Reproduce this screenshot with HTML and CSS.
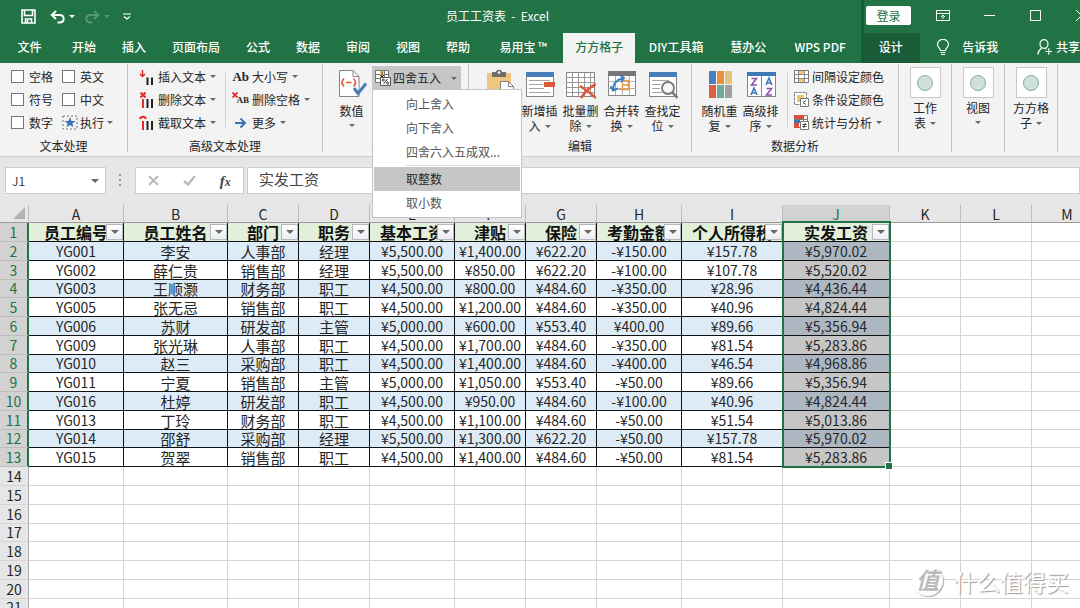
FILE: index.html
```html
<!DOCTYPE html>
<html lang="zh-CN">
<head>
<meta charset="utf-8">
<meta name="viewport" content="width=device-width, initial-scale=1">
<title>员工工资表 - Excel</title>
<link rel="stylesheet" href="styles.css">
</head>
<body>
<div class="app">
  <header class="titlebar">
    <div class="quick">
      <button class="quick-btn" aria-label="保存"><svg width="15" height="15" viewBox="0 0 15 15" fill="none" stroke="#fff" stroke-width="1.6"><path d="M1 1h13v13H1z"/><path d="M3.5 1v5.5h8V1M4.5 14v-4h6v4M6.5 11v3"/></svg></button>
      <button class="quick-btn undo" aria-label="撤消"><svg width="15" height="14" viewBox="0 0 15 14" fill="none" stroke="#fff" stroke-width="2"><path d="M1.5 5h8c5.500 0 5.500 7.500 0 7.500H7.500M6 1L1.800 5 6 9"/></svg><i class="caret"></i></button>
      <button class="quick-btn redo" aria-label="恢复"><svg width="15" height="14" viewBox="0 0 15 14" fill="none" stroke="#fff" stroke-width="2"><path d="M13.500 5h-8c-5.500 0-5.500 7.500 0 7.500h2M9 1l4.200 4L9 9"/></svg><i class="caret"></i></button>
      <button class="quick-btn custom" aria-label="自定义快速访问工具栏"><svg width="8" height="7" viewBox="0 0 8 7" fill="none" stroke="#fff" stroke-width="1.200"><path d="M0 1h8M1 3.500l3 2.500 3-2.500"/></svg></button>
    </div>
    <h1 class="doc-title">员工工资表&nbsp; -&nbsp; Excel</h1>
    <div class="window-side">
      <button class="login">登录</button>
      <button class="win-btn" aria-label="功能区显示选项"><svg width="14" height="11" viewBox="0 0 14 11" fill="none" stroke="#fff"><path d="M.5.5h13v10H.5zM.5 3.500h13M7 9V5M5 7l2-2 2 2"/></svg></button>
      <button class="win-btn" aria-label="最小化"><svg width="11" height="11" viewBox="0 0 11 11" stroke="#fff"><path d="M0 5.500h11"/></svg></button>
      <button class="win-btn" aria-label="最大化"><svg width="11" height="11" viewBox="0 0 11 11" fill="none" stroke="#fff"><path d="M.5.5h10v10H.5z"/></svg></button>
      <button class="win-btn" aria-label="关闭"><svg width="11" height="11" viewBox="0 0 11 11" stroke="#fff"><path d="M0 0l11 11M11 0L0 11"/></svg></button>
    </div>
  </header>

  <nav class="tabs" aria-label="功能区选项卡">
    <button class="tab file">文件</button>
    <button class="tab">开始</button>
    <button class="tab">插入</button>
    <button class="tab">页面布局</button>
    <button class="tab">公式</button>
    <button class="tab">数据</button>
    <button class="tab">审阅</button>
    <button class="tab">视图</button>
    <button class="tab">帮助</button>
    <button class="tab medium">易用宝 ™</button>
    <button class="tab active">方方格子</button>
    <button class="tab wide">DIY工具箱</button>
    <button class="tab">慧办公</button>
    <button class="tab wide">WPS PDF</button>
    <button class="tab context">设计</button>
    <button class="tell"><svg width="14" height="17" viewBox="0 0 14 17" fill="none" stroke="#fff" stroke-width="1.200"><path d="M4.500 11.500C4.500 9 1.500 8.500 1.500 5.500a5.300 5 0 0 1 11 0c0 3-3 3.500-3 6zM4.500 13.500h5M5 15.500h4"/></svg>告诉我</button>
    <button class="share"><svg width="15" height="16" viewBox="0 0 15 16" fill="none" stroke="#fff" stroke-width="1.200"><ellipse cx="7" cy="5" rx="4" ry="4.300"/><path d="M.8 15.500c.3-4 2-5 4-6.500M8.500 9.500l1 .8M8.500 12.500H15M11.800 9.300v6.500"/></svg>共享</button>
  </nav>

  <section class="ribbon">
    <div class="group text-group">
      <div class="tools">
        <div class="stack">
          <label class="row check"><input type="checkbox">空格</label>
          <label class="row check"><input type="checkbox">符号</label>
          <label class="row check"><input type="checkbox">数字</label>
        </div>
        <div class="stack">
          <label class="row check"><input type="checkbox">英文</label>
          <label class="row check"><input type="checkbox">中文</label>
          <button class="row run"><svg width="16" height="15" viewBox="0 0 16 15"><path d="M1 1h14v13H1z" fill="none" stroke="#777" stroke-dasharray="2 2"/><path d="M8 2l1.500 4h4l-3.200 2.400 1.200 3.900L8 10l-3.500 2.300 1.200-3.900L2.500 6h4z" fill="#3a73b4"/></svg>执行<i class="caret"></i></button>
        </div>
      </div>
      <div class="group-label">文本处理</div>
    </div>

    <div class="group adv-group">
      <div class="tools">
        <div class="stack">
          <button class="row"><svg width="16" height="16" viewBox="0 0 16 16" fill="none" stroke-width="2"><path d="M8.500 8.500V16M13 8.500V16" stroke="#222"/><path d="M3.500 1v6M1 5l2.500 2.500L6 5" stroke="#e8262b" stroke-width="1.500"/></svg>插入文本<i class="caret"></i></button>
          <button class="row"><svg width="16" height="16" viewBox="0 0 16 16" fill="none" stroke-width="2"><path d="M8.500 7V16M13 7V16" stroke="#222"/><path d="M4 7v9M1.500.5l5 5M6.500.5l-5 5" stroke="#e8262b"/></svg>删除文本<i class="caret"></i></button>
          <button class="row"><svg width="16" height="16" viewBox="0 0 16 16" fill="none" stroke-width="2"><path d="M8.500 6V15M13 6V15" stroke="#222"/><path d="M4 6v9M1 4c1-3 5-3 6 0" stroke="#e8262b"/></svg>截取文本<i class="caret"></i></button>
        </div>
        <div class="stack divided">
          <button class="row"><span class="letters">Ab</span>大小写<i class="caret"></i></button>
          <button class="row"><span class="letters small">AB<svg class="cross" width="6" height="6" viewBox="0 0 6 6" stroke="#e8262b" stroke-width="1.800"><path d="M.5.5l5 5M5.500.5l-5 5"/></svg></span>删除空格<i class="caret"></i></button>
          <button class="row"><svg width="17" height="12" viewBox="0 0 17 12" fill="none" stroke="#3a73b4" stroke-width="2"><path d="M3 6h10M8.500 1.500L13 6l-4.500 4.500"/></svg>更多<i class="caret"></i></button>
        </div>
      </div>
      <div class="group-label">高级文本处理</div>
    </div>

    <div class="group num-group">
      <div class="tools">
        <button class="big"><svg width="30" height="30" viewBox="0 0 30 30" fill="none"><path d="M2.500 1.500H16l6 6v20H2.500z" fill="#fff" stroke="#858585"/><path d="M16 1.500v6h6" stroke="#858585"/><path d="M7 9.500c-2.500 2.500-2.500 5.500 0 8M16.500 9.500c2.500 2.500 2.500 5.500 0 8M9 13.500h5.500" stroke="#e0603c" stroke-width="1.700"/><path d="M17 19l4 5.500 8-10" stroke="#4a7ebb" stroke-width="3"/></svg><span>数值</span><i class="caret"></i></button>
        <div class="menu-anchor">
          <button class="drop" aria-haspopup="menu" aria-expanded="true"><svg width="16" height="16" viewBox="0 0 16 16"><path d="M.5.5h13v12H.5z" fill="#fff" stroke="#777"/><path d="M.5 4.500h13M.5 8.500h13M9.500.5v12" stroke="#777" fill="none"/><path d="M5 1h4v8H5z" fill="#f4cf7f"/><path d="M7 1.500v5M5 5l2 2 2-2" stroke="#333" fill="none"/><path d="M5.500 7.500h10v8h-10z" fill="#fff" stroke="#555"/><g fill="none" stroke="#333"><circle cx="8.300" cy="10" r="1"/><circle cx="12.700" cy="13" r="1"/><path d="M12.500 9l-4 5"/></g></svg><span>四舍五入</span><i class="caret"></i></button>
          <div class="menu" role="menu">
            <button role="menuitem">向上舍入</button>
            <button role="menuitem">向下舍入</button>
            <button role="menuitem">四舍六入五成双...</button>
            <hr>
            <button role="menuitem" class="hover">取整数</button>
            <button role="menuitem">取小数</button>
          </div>
        </div>
      </div>
      <div class="group-label">数值录入</div>
    </div>

    <div class="group edit-group">
      <div class="tools">
        <button class="big" aria-label="粘贴"><svg width="30" height="30" viewBox="0 0 30 30"><path d="M3 4h24v24H3z" fill="#f0c67c"/><path d="M8 3h4c0-3 6-3 6 0h4v5H8z" fill="#6d6d6d"/><circle cx="15" cy="3.500" r="1.300" fill="#fff"/><path d="M16.500 12.500h8l5 5v11h-13z" fill="#fff" stroke="#858585"/><path d="M24.500 12.500v5h5" fill="none" stroke="#858585"/></svg></button>
        <button class="big"><svg width="30" height="30" viewBox="0 0 30 30" fill="none"><path d="M1.500 3.500h27v24h-27z" fill="#fff" stroke="#858585"/><path d="M1 3h28v5H1z" fill="#4a7ebb"/><path d="M4 11.500h21M4 15.500h14M4 19.500h15M4 23.500h21" stroke="#a5a5a5"/><path d="M19 13h11v5H19z" fill="#dd5b3b"/></svg><span>新增插入<i class="caret"></i></span></button>
        <button class="big"><svg width="30" height="30" viewBox="0 0 30 30" fill="none"><path d="M.5 3.500h28v24H.5z" fill="#fff" stroke="#858585"/><path d="M.5 8.500h28M.5 13.500h28M.5 18.500h28M.5 23.500h28M6.500 3.500v24M12.500 3.500v24M18.500 3.500v24M24.500 3.500v24" stroke="#999"/><path d="M14 17c5 3 10 7 16 12M30 15c-6 3-11 8-15 14" stroke="#dd5b3b" stroke-width="2.600"/></svg><span>批量删除<i class="caret"></i></span></button>
        <button class="big"><svg width="30" height="30" viewBox="0 0 30 30" fill="none"><path d="M1.500 3.500h27v23h-27z" fill="#fff" stroke="#858585"/><path d="M1 2h28v5H1z" fill="#777"/><path d="M1.500 12.500h27M1.500 19.500h27M8.500 7v19M15.500 7v19M22.500 7v19" stroke="#b2b2b2"/><path d="M15.500 11.500h6v9h-6zM15.500 16h6M12 20.500h9.500" stroke="#e8974c" stroke-width="1.500"/><path d="M6 21c0-6 3-10 10-12M13 6l4 3-3 4M3.500 17L6 21.500l5-2" stroke="#3f80c5" stroke-width="2"/></svg><span>合并转换<i class="caret"></i></span></button>
        <button class="big"><svg width="30" height="30" viewBox="0 0 30 30" fill="none"><path d="M1.500 3.500h27v24h-27z" fill="#fff" stroke="#858585"/><path d="M1 3h28v5H1z" fill="#4a7ebb"/><path d="M4 11.500h17M4 15.500h9M4 19.500h8M4 23.500h10" stroke="#a5a5a5"/><circle cx="20" cy="19" r="6" fill="#f8f8f8" stroke="#777" stroke-width="1.800"/><path d="M24.500 23.500l5 5.500" stroke="#777" stroke-width="2.600"/></svg><span>查找定位<i class="caret"></i></span></button>
      </div>
      <div class="group-label">编辑</div>
    </div>

    <div class="group data-group">
      <div class="tools">
        <button class="big"><svg width="30" height="30" viewBox="0 0 30 30"><path d="M4 2h7v13H4z" fill="#4a80bc"/><path d="M12 2h7v13h-7z" fill="#e88f40"/><path d="M20 2h7v13h-7z" fill="#e9c37c"/><path d="M4 16h7v13H4z" fill="#dd5f42"/><path d="M12 16h7v13h-7z" fill="#70aa93"/><path d="M20 16h7v13h-7z" fill="#a0a0a0"/></svg><span>随机重复<i class="caret"></i></span></button>
        <button class="big"><svg width="30" height="30" viewBox="0 0 30 30" fill="none"><path d="M1.500 3.500h28v24h-28zM15.500 6v21" fill="#fff" stroke="#858585"/><path d="M1 3h29v4H1z" fill="#3f78b8"/><path d="M5.500 9.500h5l-5 6.500h5.500M20.500 19.500h5l-5 6.500H26" stroke="#8f52ab" stroke-width="1.600"/><path d="M5 26l3-7 3 7M6 24h4M20 16l3-7 3 7M21 14h4" stroke="#3f78b8" stroke-width="1.600"/></svg><span>高级排序<i class="caret"></i></span></button>
        <div class="stack divided">
          <button class="row"><svg width="15" height="14" viewBox="0 0 15 14" fill="none"><path d="M.5.5h14v12H.5z" fill="#fff" stroke="#777"/><path d="M.5 4.500h14M.5 8.500h14M4.500.5v12M10.500.5v12" stroke="#888"/><path d="M5 1h5v3H5zM5 9h5v3H5z" fill="#f0c878"/></svg>间隔设定颜色</button>
          <button class="row"><svg width="15" height="15" viewBox="0 0 15 15" fill="none"><path d="M.5.5h12v12H.5z" fill="#fff" stroke="#777" stroke-dasharray="3 1"/><path d="M3 3h7v7H3z" fill="#f0c070"/><path d="M6.500 6.500h8v8h-8z" fill="#fff" stroke="#777"/><path d="M12 8.500l-3 2 3 2" stroke="#444"/></svg>条件设定颜色</button>
          <button class="row"><svg width="15" height="15" viewBox="0 0 15 15" fill="none"><path d="M.5.5h13v12H.5z" fill="#fff" stroke="#777"/><path d="M0 0h9v4H0zM0 8h5v5H0z" fill="#d94f38"/><path d="M0 4h6v4H0z" fill="#3f78b8"/><path d="M.5 4.500h13M9.500.5v6" stroke="#777"/><path d="M6.500 6.500h8v8h-8z" fill="#fff" stroke="#777"/><path d="M8.500 9.500h4M8.500 11.500h4M11.500 8l-2 5" stroke="#444"/></svg>统计与分析<i class="caret"></i></button>
        </div>
      </div>
      <div class="group-label">数据分析</div>
    </div>

    <div class="group mini"><button class="big"><span class="tile"></span><span>工作<br>表<i class="caret"></i></span></button></div>
    <div class="group mini"><button class="big"><span class="tile"></span><span>视图</span><i class="caret"></i></button></div>
    <div class="group mini"><button class="big"><span class="tile"></span><span>方方格子<i class="caret"></i></span></button></div>
  </section>

  <section class="formula-bar">
    <div class="name-box"><input type="text" value="J1" aria-label="名称框"><i class="caret"></i></div>
    <svg class="grip" width="3" height="13" viewBox="0 0 3 13" fill="#999"><path d="M0 0h2v2H0zM0 5h2v2H0zM0 10h2v2H0z"/></svg>
    <div class="formula-tools">
      <button aria-label="取消"><svg width="11" height="11" viewBox="0 0 11 11" stroke="#b9b9b9" stroke-width="1.800"><path d="M1 1l9 9M10 1l-9 9"/></svg></button>
      <button aria-label="输入"><svg width="13" height="11" viewBox="0 0 13 11" fill="none" stroke="#b9b9b9" stroke-width="2.400"><path d="M1 6l4 3.500L12 1"/></svg></button>
      <button class="fx" aria-label="插入函数"><em>f</em><em class="sub">x</em></button>
    </div>
    <input class="formula" type="text" value="实发工资" aria-label="编辑栏">
  </section>

  <main class="sheet">
    <table class="cells">
      <colgroup><col class="w-head"><col class="w-a"><col class="w-b"><col class="w-s"><col class="w-s"><col class="w-m"><col class="w-s"><col class="w-s"><col class="w-m"><col class="w-i"><col class="w-j"><col class="w-s"><col class="w-s"><col class="w-s"></colgroup>
      <thead>
        <tr><th class="corner"></th><th>A</th><th>B</th><th>C</th><th>D</th><th>E</th><th>F</th><th>G</th><th>H</th><th>I</th><th class="picked">J</th><th>K</th><th>L</th><th>M</th></tr>
      </thead>
      <tbody class="data">
        <tr class="fields"><th>1</th><td>员工编号<button class="filter" aria-label="筛选员工编号"></button></td><td>员工姓名<button class="filter" aria-label="筛选员工姓名"></button></td><td>部门<button class="filter" aria-label="筛选部门"></button></td><td>职务<button class="filter" aria-label="筛选职务"></button></td><td>基本工资<button class="filter" aria-label="筛选基本工资"></button></td><td>津贴<button class="filter" aria-label="筛选津贴"></button></td><td>保险<button class="filter" aria-label="筛选保险"></button></td><td>考勤金额<button class="filter" aria-label="筛选考勤金额"></button></td><td>个人所得税<button class="filter" aria-label="筛选个人所得税"></button></td><td class="sel first">实发工资<button class="filter" aria-label="筛选实发工资"></button></td><td></td><td></td><td></td></tr>
        <tr><th>2</th><td>YG001</td><td class="zh">李安</td><td class="zh">人事部</td><td class="zh">经理</td><td>¥5,500.00</td><td>¥1,400.00</td><td>¥622.20</td><td>-¥150.00</td><td>¥157.78</td><td class="sel">¥5,970.02</td><td></td><td></td><td></td></tr>
        <tr><th>3</th><td>YG002</td><td class="zh">薛仁贵</td><td class="zh">销售部</td><td class="zh">经理</td><td>¥5,500.00</td><td>¥850.00</td><td>¥622.20</td><td>-¥100.00</td><td>¥107.78</td><td class="sel">¥5,520.02</td><td></td><td></td><td></td></tr>
        <tr><th>4</th><td>YG003</td><td class="zh">王顺灏</td><td class="zh">财务部</td><td class="zh">职工</td><td>¥4,500.00</td><td>¥800.00</td><td>¥484.60</td><td>-¥350.00</td><td>¥28.96</td><td class="sel">¥4,436.44</td><td></td><td></td><td></td></tr>
        <tr><th>5</th><td>YG005</td><td class="zh">张无忌</td><td class="zh">销售部</td><td class="zh">职工</td><td>¥4,500.00</td><td>¥1,200.00</td><td>¥484.60</td><td>-¥350.00</td><td>¥40.96</td><td class="sel">¥4,824.44</td><td></td><td></td><td></td></tr>
        <tr><th>6</th><td>YG006</td><td class="zh">苏财</td><td class="zh">研发部</td><td class="zh">主管</td><td>¥5,000.00</td><td>¥600.00</td><td>¥553.40</td><td>¥400.00</td><td>¥89.66</td><td class="sel">¥5,356.94</td><td></td><td></td><td></td></tr>
        <tr><th>7</th><td>YG009</td><td class="zh">张光琳</td><td class="zh">人事部</td><td class="zh">职工</td><td>¥4,500.00</td><td>¥1,700.00</td><td>¥484.60</td><td>-¥350.00</td><td>¥81.54</td><td class="sel">¥5,283.86</td><td></td><td></td><td></td></tr>
        <tr><th>8</th><td>YG010</td><td class="zh">赵三</td><td class="zh">采购部</td><td class="zh">职工</td><td>¥4,500.00</td><td>¥1,400.00</td><td>¥484.60</td><td>-¥400.00</td><td>¥46.54</td><td class="sel">¥4,968.86</td><td></td><td></td><td></td></tr>
        <tr><th>9</th><td>YG011</td><td class="zh">宁夏</td><td class="zh">销售部</td><td class="zh">主管</td><td>¥5,000.00</td><td>¥1,050.00</td><td>¥553.40</td><td>-¥50.00</td><td>¥89.66</td><td class="sel">¥5,356.94</td><td></td><td></td><td></td></tr>
        <tr><th>10</th><td>YG016</td><td class="zh">杜婷</td><td class="zh">研发部</td><td class="zh">职工</td><td>¥4,500.00</td><td>¥950.00</td><td>¥484.60</td><td>-¥100.00</td><td>¥40.96</td><td class="sel">¥4,824.44</td><td></td><td></td><td></td></tr>
        <tr><th>11</th><td>YG013</td><td class="zh">丁玲</td><td class="zh">财务部</td><td class="zh">职工</td><td>¥4,500.00</td><td>¥1,100.00</td><td>¥484.60</td><td>-¥50.00</td><td>¥51.54</td><td class="sel">¥5,013.86</td><td></td><td></td><td></td></tr>
        <tr><th>12</th><td>YG014</td><td class="zh">邵舒</td><td class="zh">采购部</td><td class="zh">经理</td><td>¥5,500.00</td><td>¥1,300.00</td><td>¥622.20</td><td>-¥50.00</td><td>¥157.78</td><td class="sel">¥5,970.02</td><td></td><td></td><td></td></tr>
        <tr><th>13</th><td>YG015</td><td class="zh">贺翠</td><td class="zh">销售部</td><td class="zh">职工</td><td>¥4,500.00</td><td>¥1,400.00</td><td>¥484.60</td><td>-¥50.00</td><td>¥81.54</td><td class="sel last">¥5,283.86<span class="handle"></span></td><td></td><td></td><td></td></tr>
      </tbody>
      <tbody class="blank">
        <tr><th>14</th><td></td><td></td><td></td><td></td><td></td><td></td><td></td><td></td><td></td><td></td><td></td><td></td><td></td></tr>
        <tr><th>15</th><td></td><td></td><td></td><td></td><td></td><td></td><td></td><td></td><td></td><td></td><td></td><td></td><td></td></tr>
        <tr><th>16</th><td></td><td></td><td></td><td></td><td></td><td></td><td></td><td></td><td></td><td></td><td></td><td></td><td></td></tr>
        <tr><th>17</th><td></td><td></td><td></td><td></td><td></td><td></td><td></td><td></td><td></td><td></td><td></td><td></td><td></td></tr>
        <tr><th>18</th><td></td><td></td><td></td><td></td><td></td><td></td><td></td><td></td><td></td><td></td><td></td><td></td><td></td></tr>
        <tr><th>19</th><td></td><td></td><td></td><td></td><td></td><td></td><td></td><td></td><td></td><td></td><td></td><td></td><td></td></tr>
        <tr><th>20</th><td></td><td></td><td></td><td></td><td></td><td></td><td></td><td></td><td></td><td></td><td></td><td></td><td></td></tr>
        <tr><th>21</th><td></td><td></td><td></td><td></td><td></td><td></td><td></td><td></td><td></td><td></td><td></td><td></td><td></td></tr>
      </tbody>
    </table>
    <div class="watermark"><span class="mark">值</span><span>什么值得买</span></div>
  </main>
</div>
</body>
</html>
```
FILE: styles.css
```css
* { box-sizing: border-box; }

body {
  margin: 0;
  background: #fff;
  color: #262626;
  font: 12px/16px "Noto Sans CJK SC", "Noto Sans", sans-serif;
}

button, input {
  margin: 0;
  padding: 0;
  border: 0;
  background: none;
  color: inherit;
  font: inherit;
  border-radius: 0;
}

svg { flex: none; display: block; }

.app {
  display: flex;
  flex-direction: column;
  height: 100vh;
  overflow: hidden;
}

.caret {
  display: inline-block;
  flex: none;
  border: 3px solid transparent;
  border-top-color: #666;
  border-bottom: 0;
}

/* Title bar */
.titlebar {
  display: flex;
  height: 33px;
  flex: none;
  background: #217346;
  color: #fff;
}

.quick {
  display: flex;
  align-items: center;
  flex: 0 0 134px;
  padding-left: 21px;
}

.quick-btn { display: flex; align-items: center; gap: 4px; }
.quick-btn .caret { border-top-color: #fff; }
.undo { margin-left: 14px; }
.redo { margin-left: 10px; opacity: .25; }
.custom { margin-left: 13px; }

.doc-title {
  flex: 1;
  margin: 0;
  font-size: 12px;
  font-weight: 400;
  line-height: 31px;
  text-align: center;
  white-space: nowrap;
}

.window-side {
  display: flex;
  align-items: center;
  flex: 0 0 219px;
  padding: 0 0 2px 2px;
  border-left: 3px solid #1b5c38;
  overflow: hidden;
}

.login {
  flex: 0 0 45px;
  height: 19px;
  margin-right: 9px;
  border-radius: 2px;
  background: #fff;
  color: #217346;
}

.win-btn { flex: 0 0 46px; display: flex; justify-content: center; }

/* Tabs */
.tabs {
  display: flex;
  flex: none;
  height: 30px;
  background: #217346;
  color: #fff;
  font-weight: 500;
  white-space: nowrap;
}

.tab { flex: none; padding: 0 13px 2px; }
.tab.file { width: 59px; }
.tab.medium { width: 80px; padding: 0 0 2px; }
.tab.wide { width: 82px; padding: 0 0 2px; }
.tab.active { padding: 0 12px 2px; background: #f3f3f3; color: #217346; }
.tab.context { width: 59px; background: #1b5c38; }

.tell, .share { display: flex; align-items: center; padding-bottom: 2px; }
.tell { gap: 12px; margin-left: 16px; }
.share { gap: 4px; margin-left: auto; }

/* Ribbon */
.ribbon {
  display: flex;
  flex: none;
  height: 94px;
  padding: 1px 0 4px;
  border-bottom: 1px solid #cfcfcf;
  background: #f3f3f3;
  white-space: nowrap;
}

.group {
  display: flex;
  flex-direction: column;
  flex: none;
  border-right: 1px solid #c4c4c4;
}

.text-group { width: 128px; }
.adv-group { width: 195px; }
.num-group { width: 146px; }
.edit-group { width: 223px; }
.data-group { width: 207px; }

.tools { display: flex; flex: 1; }
.group-label {
  flex: none;
  line-height: 12px;
  text-align: center;
}

.stack { display: flex; flex-direction: column; padding-top: 1px; }
.row { display: flex; align-items: center; gap: 3px; height: 23px; }
.row .caret { margin-left: 1px; }

.text-group .tools { gap: 9px; padding-left: 11px; }
.check { gap: 5px; }
.check input {
  width: 13px;
  height: 13px;
  appearance: none;
  border: 1px solid #777;
  background: #fff;
}
.run { gap: 2px; }

.adv-group .tools { padding-left: 11px; }
.divided {
  position: relative;
  margin-left: 9px;
  padding-left: 7px;
}
.divided::before {
  content: "";
  position: absolute;
  left: 0;
  top: 9px;
  height: 54px;
  border-left: 1px solid #d0d0d0;
}
.letters {
  position: relative;
  width: 17px;
  font: bold 13px/16px "Liberation Serif", serif;
  text-align: right;
}
.letters.small { font: bold 9px/16px "Liberation Serif", serif; }
.cross { position: absolute; left: 0; top: 0; }

.big {
  display: flex;
  flex-direction: column;
  align-items: center;
  width: 41px;
  padding-top: 5px;
  line-height: 15px;
}
.big > span:not(.tile) {
  width: 36px;
  padding-top: 4px;
  white-space: normal;
  word-break: break-all;
}
.big span .caret { margin: 0 0 3px 4px; }
.big > .caret { margin-top: 6px; }

.num-group .tools { padding-left: 8px; }
.menu-anchor { position: relative; padding-top: 2px; }
.drop {
  display: flex;
  align-items: center;
  gap: 2px;
  width: 89px;
  height: 24px;
  padding: 0 4px 0 3px;
  background: #c6c6c6;
}
.drop .caret { margin-left: auto; }
.menu {
  position: absolute;
  z-index: 5;
  left: 0;
  top: 25px;
  width: 150px;
  padding: 2px 1px;
  border: 1px solid #c6c6c6;
  background: #fff;
  color: #555;
}
.menu button {
  display: block;
  width: 100%;
  height: 24px;
  padding-left: 32px;
  text-align: left;
}
.menu .hover { background: #c6c6c6; color: #262626; }
.menu hr {
  height: 1px;
  margin: 1px 0 1px 32px;
  border: 0;
  background: #dcdcdc;
}

.edit-group .tools { padding-left: 9px; }

.data-group .tools { padding-left: 7px; }
.data-group .divided { margin-left: 6px; }

.mini { width: 53px; align-items: center; }
.mini .big { padding-top: 3px; }
.mini .big > span:not(.tile) { padding-top: 2px; }
.tile {
  display: flex;
  align-items: center;
  justify-content: center;
  width: 31px;
  height: 31px;
  border: 1px solid #c8c8c8;
  background: #fff;
}
.tile::before {
  content: "";
  width: 14px;
  height: 14px;
  border: 1px solid #7fb09a;
  border-radius: 50%;
  background: #cfe0d8;
}

/* Formula bar */
.formula-bar {
  display: flex;
  align-items: center;
  flex: none;
  height: 48px;
  padding: 0 0 1px 5px;
  background: #e6e6e6;
}
.name-box, .formula-tools, .formula {
  height: 27px;
  border: 1px solid #cdcdcd;
  background: #fff;
}
.name-box {
  display: flex;
  align-items: center;
  width: 101px;
  padding: 0 6px;
}
.name-box input { flex: 1; min-width: 0; color: #444; }
.name-box .caret { border-width: 4px; border-bottom: 0; }
.grip { margin: 0 13px; }
.formula-tools {
  display: flex;
  width: 109px;
}
.formula-tools button {
  display: flex;
  flex: 1;
  align-items: center;
  justify-content: center;
}
.fx { color: #444; font: bold 15px/16px "Liberation Serif", serif; }
.fx .sub { padding-top: 3px; font-size: 12px; }
.formula {
  flex: 1;
  min-width: 0;
  margin-left: 3px;
  padding: 0 11px 4px;
  font-size: 15px;
  color: #444;
}

/* Worksheet */
.sheet {
  position: relative;
  flex: 1;
  min-height: 0;
  overflow: hidden;
}

.cells {
  width: 1103px;
  min-width: 100%;
  table-layout: fixed;
  border-collapse: separate;
  border-spacing: 0;
  font-size: 14px;
  line-height: 17px;
  text-align: center;
}

.w-head { width: 29px; }
.w-a { width: 95px; }
.w-b { width: 104px; }
.w-s { width: 71px; }
.w-m { width: 85px; }
.w-i { width: 101px; }
.w-j { width: 107px; }

.cells tr { height: 19px; }
.cells tbody tr:nth-child(4n) { height: 18px; }
.cells th, .cells td {
  position: relative;
  height: inherit;
  padding: 0;
  border: 0 solid #d4d4d4;
  border-width: 0 1px 1px 0;
  white-space: nowrap;
}
.cells th { background: #e6e6e6; font-weight: 400; }

.cells thead tr { height: 18px; }
.cells thead th {
  padding-top: 2px;
  border-right-color: #bdbdbd;
  border-bottom-color: #9b9b9b;
  line-height: 15px;
}
.cells thead .picked { background: #d2d2d2; color: #217346; }
.corner::after {
  content: "";
  position: absolute;
  right: 3px;
  bottom: 3px;
  border: 6px solid #b3b3b3;
  border-top-color: transparent;
  border-left-color: transparent;
}

.data th {
  border-right: 2px solid #217346;
  border-bottom-color: #bdbdbd;
  background: #d2d2d2;
  color: #217346;
}
.blank th { border-right-color: #ababab; }

.data td:nth-child(-n+11) { border-color: #111; }
.data tr:nth-child(even) td:nth-child(-n+10) { background: #ddebf7; }
.data .fields td:nth-child(-n+11) {
  padding-bottom: 1px;
  background: #e2efda;
  color: #111;
  font-size: 16px;
  font-weight: 700;
  line-height: 16px;
}
.zh { font-size: 15px; }

.data .sel { background: #c6c6c6; }
.data tr:nth-child(even) .sel { background: #adb7c2; }
.sel::after {
  content: "";
  position: absolute;
  z-index: 1;
  inset: -1px -2px -1px -1px;
  border: 0 solid #217346;
  border-width: 0 2px;
  pointer-events: none;
}
.sel.first::after { border-top-width: 2px; top: -2px; }
.sel.last::after { border-bottom-width: 2px; bottom: -2px; }
.handle {
  position: absolute;
  z-index: 2;
  right: -3px;
  bottom: -3px;
  width: 6px;
  height: 6px;
  outline: 1px solid #fff;
  background: #217346;
}

.filter {
  position: absolute;
  right: 0;
  top: 1px;
  display: flex;
  align-items: center;
  justify-content: center;
  width: 17px;
  height: 16px;
  border: 1px solid #b4b8be;
  background: linear-gradient(#fff, #eceef2);
}
.filter::before {
  content: "";
  border: 4px solid transparent;
  border-top-color: #666;
  border-bottom: 0;
}

.watermark {
  position: absolute;
  right: 11px;
  bottom: 12px;
  display: flex;
  align-items: center;
  gap: 11px;
  color: #fff;
  font-size: 23px;
  line-height: 28px;
  text-shadow: 1px 1px 1px #999;
}
.mark {
  width: 31px;
  height: 31px;
  border-radius: 50%;
  background: #fff;
  box-shadow: 1px 1px 1px #aaa;
  color: #bbb;
  font-style: italic;
  font-weight: 700;
  line-height: 29px;
  text-align: center;
  text-shadow: none;
}
```
